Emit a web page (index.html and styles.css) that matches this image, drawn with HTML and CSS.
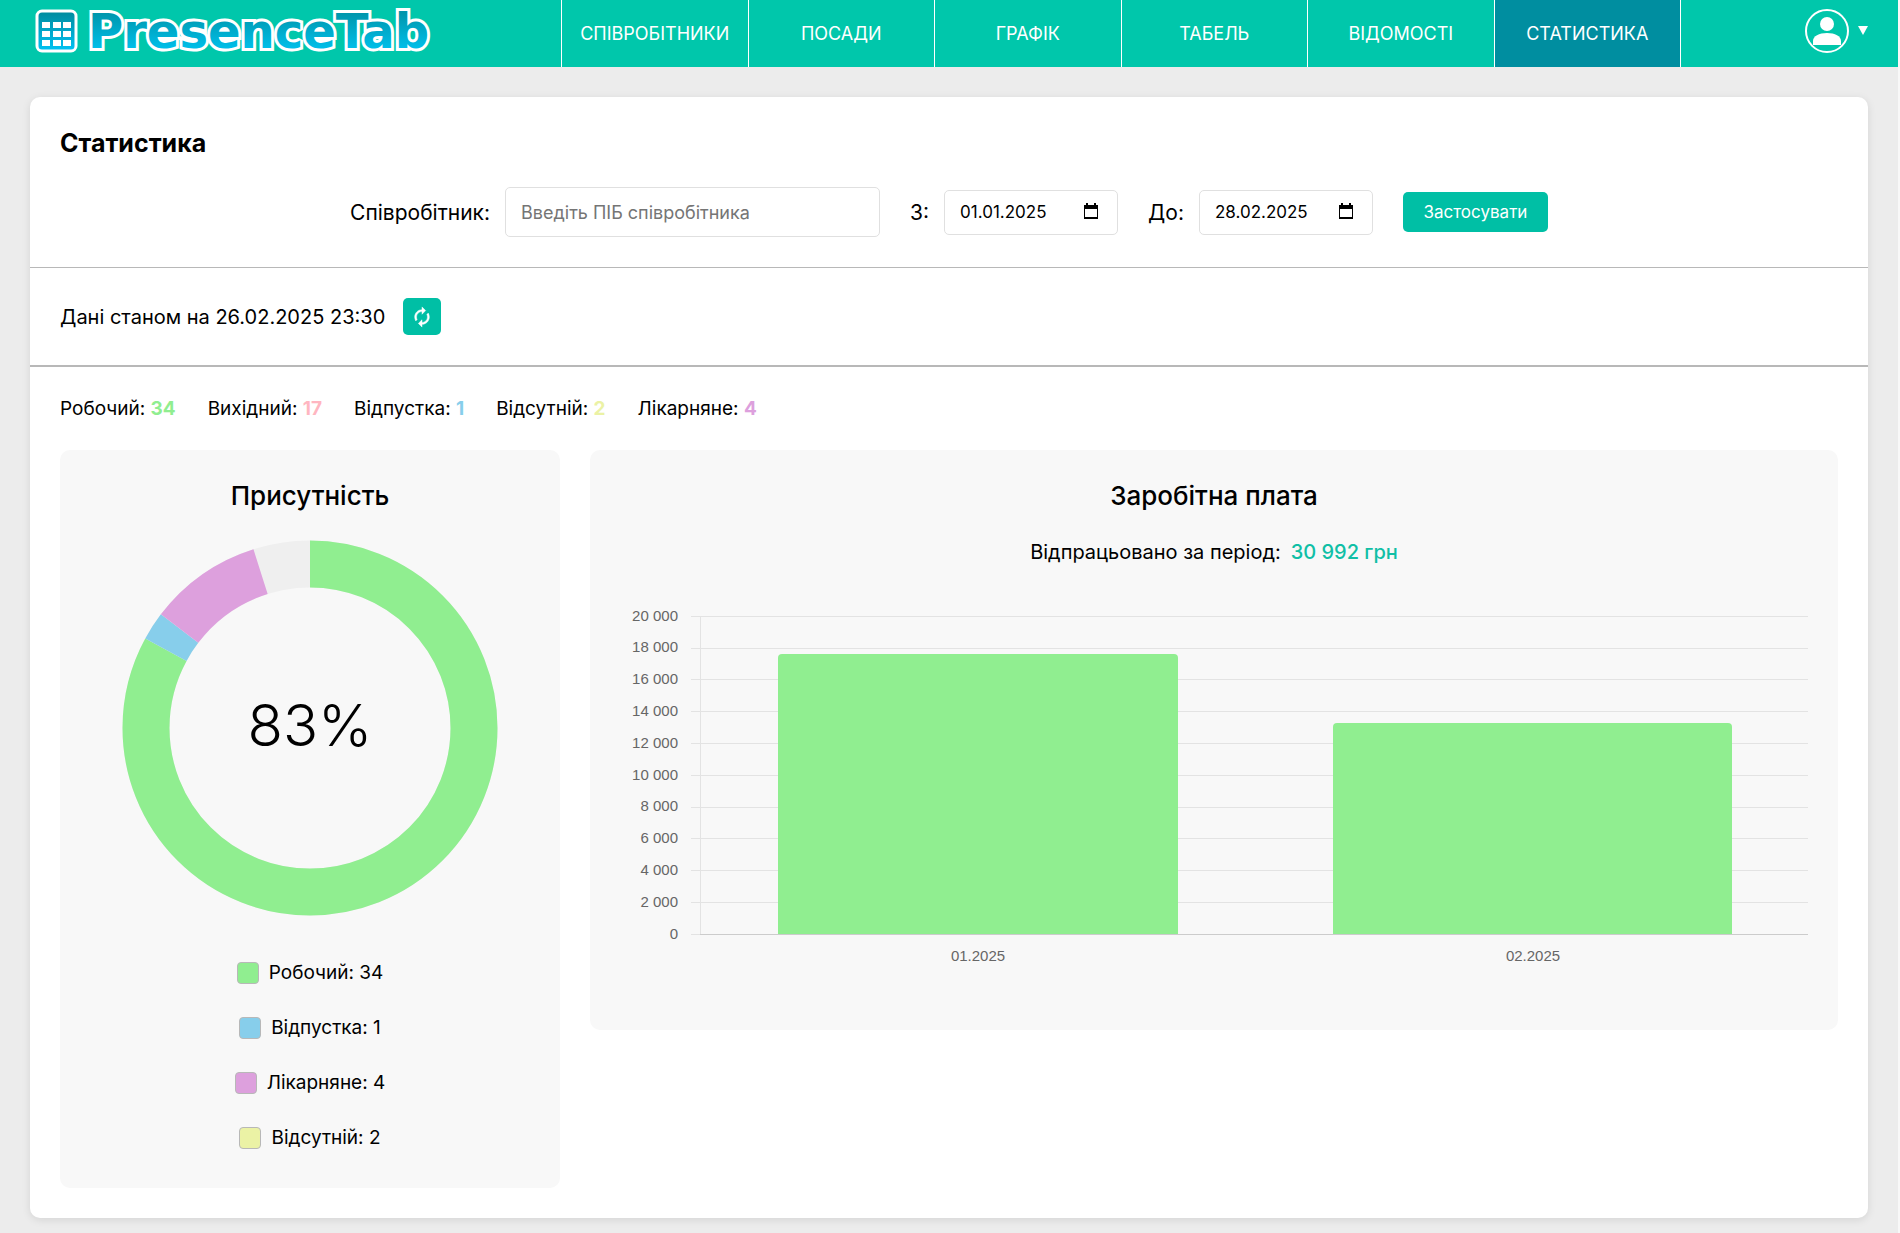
FILE: index.html
```html
<!DOCTYPE html>
<html lang="uk">
<head>
<meta charset="utf-8">
<title>PresenceTab — Статистика</title>
<meta name="viewport" content="width=device-width, initial-scale=1">
<link rel="stylesheet" href="styles.css">
</head>
<body>
<header class="topbar">
  <a class="brand" href="#" aria-label="PresenceTab">
    <svg class="brand-logo" viewBox="0 0 420 67" role="img" aria-label="PresenceTab">
      <defs>
        <linearGradient id="g" x1="0" y1="0" x2="0" y2="1">
          <stop offset="0" stop-color="#008a9c"/><stop offset="1" stop-color="#00c3f5"/>
        </linearGradient>
        <linearGradient id="t" gradientUnits="userSpaceOnUse" x1="0" y1="13" x2="0" y2="49">
          <stop offset="0" stop-color="#0096ac"/><stop offset="1" stop-color="#00bfea"/>
        </linearGradient>
      </defs>
      <rect x="2" y="11" width="39" height="40" rx="5" fill="url(#g)" stroke="#fff" stroke-width="3"/>
      <path fill="#fff" d="M7 22h8v6H7zM18 22h8v6h-8zM28 22h8v6h-8zM7 31h8v6H7zM18 31h8v6h-8zM28 31h8v6h-8zM7 40h8v6H7zM18 40h8v6h-8zM28 40h8v6h-8z"/>
      <text class="brand-name" x="53" y="48" fill="url(#t)">PresenceTab</text>
    </svg>
  </a>
  <nav class="nav">
    <a href="#">СПІВРОБІТНИКИ</a>
    <a href="#">ПОСАДИ</a>
    <a href="#">ГРАФІК</a>
    <a href="#">ТАБЕЛЬ</a>
    <a href="#">ВІДОМОСТІ</a>
    <a href="#" class="active" aria-current="page">СТАТИСТИКА</a>
  </nav>
  <button class="user" type="button" aria-label="Профіль">
    <svg width="44" height="44" viewBox="0 0 44 44">
      <circle cx="22" cy="22" r="21" fill="none" stroke="#fff" stroke-width="2"/>
      <circle cx="22" cy="15" r="7" fill="#fff"/>
      <path fill="#fff" d="M8 36v-4c0-5 6-8 14-8s14 3 14 8v4z"/>
    </svg>
    <svg width="10" height="9" viewBox="0 0 10 9"><path fill="#fff" d="M0 0h10L5 9z"/></svg>
  </button>
</header>

<main class="card">
  <section class="filters">
    <h1>Статистика</h1>
    <form class="filter-row">
      <div class="field">
        <label for="employee">Співробітник:</label>
        <input id="employee" class="employee" type="text" placeholder="Введіть ПІБ співробітника">
      </div>
      <div class="field">
        <label for="from">З:</label>
        <span class="date">
          <input id="from" type="text" value="01.01.2025">
          <svg width="14" height="16" viewBox="0 0 14 16"><path fill="#000" fill-rule="evenodd" d="M2 0h2v2h6V0h2v2h2v14H0V2h2zM1 6v8h12V6z"/></svg>
        </span>
      </div>
      <div class="field">
        <label for="to">До:</label>
        <span class="date">
          <input id="to" type="text" value="28.02.2025">
          <svg width="14" height="16" viewBox="0 0 14 16"><path fill="#000" fill-rule="evenodd" d="M2 0h2v2h6V0h2v2h2v14H0V2h2zM1 6v8h12V6z"/></svg>
        </span>
      </div>
      <button class="apply" type="button">Застосувати</button>
    </form>
  </section>

  <section class="status">
    <span>Дані станом на 26.02.2025 23:30</span>
    <button class="refresh" type="button" aria-label="Оновити">
      <svg width="22" height="22" viewBox="0 0 24 24"><path fill="#fff" stroke="#fff" stroke-width=".5" d="M12 6v3l4-4-4-4v3c-4.400 0-8 3.600-8 8 0 1.600.5 3 1.200 4.300L6.700 14.800C6.300 14 6 13 6 12c0-3.300 2.700-6 6-6zm6.800 1.700L17.300 9.200c.4.900.7 1.800.7 2.800 0 3.300-2.700 6-6 6v-3l-4 4 4 4v-3c4.400 0 8-3.600 8-8 0-1.600-.5-3-1.200-4.300z"/></svg>
    </button>
  </section>

  <section class="report">
    <ul class="summary">
      <li>Робочий: <b class="c-work">34</b></li>
      <li>Вихідний: <b class="c-off">17</b></li>
      <li>Відпустка: <b class="c-vacation">1</b></li>
      <li>Відсутній: <b class="c-absent">2</b></li>
      <li>Лікарняне: <b class="c-sick">4</b></li>
    </ul>

    <div class="panels">
      <article class="panel">
        <h2>Присутність</h2>
        <svg class="donut" viewBox="0 0 376 376" role="img" aria-label="83%">
          <g fill="none" stroke-width="47" transform="rotate(-90 188 188)">
            <circle cx="188" cy="188" r="164" stroke="#efefef"/>
            <circle cx="188" cy="188" r="164" pathLength="41" stroke="#90ee90" stroke-dasharray="34 7"/>
            <circle cx="188" cy="188" r="164" pathLength="41" stroke="#87ceeb" stroke-dasharray="1 40" stroke-dashoffset="-34"/>
            <circle cx="188" cy="188" r="164" pathLength="41" stroke="#dda0dd" stroke-dasharray="4 37" stroke-dashoffset="-35"/>
          </g>
          <text x="188" y="206">83%</text>
        </svg>
        <ul class="legend">
          <li><i class="b-work"></i>Робочий: 34</li>
          <li><i class="b-vacation"></i>Відпустка: 1</li>
          <li><i class="b-sick"></i>Лікарняне: 4</li>
          <li><i class="b-absent"></i>Відсутній: 2</li>
        </ul>
      </article>

      <article class="panel">
        <h2>Заробітна плата</h2>
        <p class="earned">Відпрацьовано за період: <strong>30 992 грн</strong></p>
        <svg class="chart" viewBox="0 0 1188 391" role="img" aria-label="Заробітна плата за місяцями">
          <path class="grid" d="M71 15.500H1188M71 47.500H1188M71 78.500H1188M71 110.500H1188M71 142.500H1188M71 174.500H1188M71 206.500H1188M71 237.500H1188M71 269.500H1188M71 301.500H1188M71 333.500H1188M80.500 15V333"/>
          <path class="base" d="M80 333.500H1188"/>
          <path class="bar" d="M158 333V57a4 4 0 0 1 4-4H554a4 4 0 0 1 4 4V333z"/>
          <path class="bar" d="M713 333V126a4 4 0 0 1 4-4H1108a4 4 0 0 1 4 4V333z"/>
          <g class="ylabels">
            <text x="58" y="20">20 000</text><text x="58" y="51">18 000</text>
            <text x="58" y="83">16 000</text><text x="58" y="115">14 000</text>
            <text x="58" y="147">12 000</text><text x="58" y="179">10 000</text>
            <text x="58" y="210">8 000</text><text x="58" y="242">6 000</text>
            <text x="58" y="274">4 000</text><text x="58" y="306">2 000</text>
            <text x="58" y="338">0</text>
          </g>
          <g class="xlabels"><text x="358" y="360">01.2025</text><text x="913" y="360">02.2025</text></g>
        </svg>
      </article>
    </div>
  </section>
</main>
</body>
</html>
```

FILE: styles.css
```css
* { box-sizing: border-box; }

body {
  margin: 0;
  border-right: 2px solid #f8f8f8;
  background: #ececec;
  color: #000;
  font-family: Inter, "Noto Sans", sans-serif;
  font-size: 19px;
}

h1, h2, p, ul { margin: 0; padding: 0; }
ul { list-style: none; }
button, input { font-family: inherit; }
button { border: 0; cursor: pointer; }

/* Top bar */
.topbar {
  display: flex;
  align-items: stretch;
  height: 67px;
  padding: 0 30px 0 35px;
  background: #00c7ab;
}
.brand { flex: 0 0 526px; }
.brand-logo { display: block; width: 420px; height: 67px; }
.brand-name {
  font-family: "DejaVu Sans", sans-serif;
  font-weight: 700;
  font-size: 48px;
  stroke: #fff;
  stroke-width: 6px;
  stroke-linejoin: miter;
  stroke-miterlimit: 2;
  paint-order: stroke;
}
.nav {
  flex: 0 1 1120px;
  display: grid;
  grid-template-columns: repeat(6, 1fr);
  border-right: 1px solid #fff;
  font-size: 18px;
}
.nav a {
  display: flex;
  align-items: center;
  justify-content: center;
  border-left: 1px solid #fff;
  color: #fff;
  text-decoration: none;
}
.nav .active { background: #008ea0; }
.user {
  display: flex;
  align-items: center;
  gap: 9px;
  margin-left: auto;
  padding: 0 0 6px;
  background: none;
}

/* Page card */
.card {
  margin: 30px 30px 15px;
  background: #fff;
  border-radius: 10px;
  box-shadow: 0 2px 8px rgba(0, 0, 0, .1);
}
.filters { padding: 30px; border-bottom: 1px solid #b8b8b8; }
h1 { font-size: 25px; line-height: 32px; font-weight: 700; }
.filter-row {
  display: flex;
  justify-content: center;
  align-items: center;
  gap: 30px;
  margin-top: 28px;
}
.field { display: flex; align-items: center; gap: 15px; font-size: 21px; }
input {
  border: 1px solid #e0e0e0;
  border-radius: 5px;
  background: #fff;
  color: #000;
  font-size: 17px;
}
input::placeholder { color: #757575; opacity: 1; }
.employee { width: 375px; height: 50px; padding: 0 15px; font-size: 18px; }
.date { position: relative; display: flex; }
.date input { width: 174px; height: 45px; padding: 0 15px; }
.date svg { position: absolute; right: 20px; top: 13px; }
.apply {
  width: 145px;
  height: 40px;
  padding: 0;
  border-radius: 5px;
  background: #00bfa5;
  color: #fff;
  font-size: 17px;
}

.status {
  display: flex;
  align-items: center;
  gap: 18px;
  padding: 30px;
  border-bottom: 2px solid #b8b8b8;
  font-size: 20px;
}
.refresh {
  display: grid;
  place-items: center;
  width: 38px;
  height: 37px;
  padding: 0;
  border-radius: 5px;
  background: #00bfa5;
}

.report { padding: 30px; }
.summary { display: flex; gap: 32px; line-height: 23px; }

.panels {
  display: grid;
  grid-template-columns: 500px 1fr;
  align-items: start;
  gap: 30px;
  margin-top: 30px;
}
.panel {
  display: flex;
  flex-direction: column;
  align-items: center;
  padding: 30px 30px 38px;
  border-radius: 10px;
  background: #f8f8f8;
}
h2 { font-size: 26px; line-height: 32px; font-weight: 500; }

.donut { width: 376px; height: 376px; margin-top: 28px; }
.donut text { font-size: 58px; font-weight: 300; text-anchor: middle; }
.legend {
  display: flex;
  flex-direction: column;
  align-items: center;
  gap: 31px;
  margin-top: 45px;
  line-height: 24px;
}
.legend li { display: flex; align-items: center; gap: 10px; }
.legend i {
  width: 22px;
  height: 22px;
  border: 1px solid #b8b8b8;
  border-radius: 4px;
}

.earned {
  display: flex;
  align-items: center;
  gap: 10px;
  margin-top: 28px;
  font-size: 20px;
  line-height: 24px;
}
.earned strong { color: #10bfa6; font-weight: 500; }
.chart { width: 100%; height: auto; margin-top: 37px; }
.chart text {
  font-family: "Liberation Sans", Arial, sans-serif;
  font-size: 15px;
  fill: #666;
}
.ylabels { text-anchor: end; }
.xlabels { text-anchor: middle; }
.grid { stroke: #e3e3e3; fill: none; }
.base { stroke: #ccc; }
.bar { fill: #90ee90; }

.c-work { color: #90ee90; }
.c-off { color: #ffb6c1; }
.c-vacation { color: #87ceeb; }
.c-absent { color: #ebf2a5; }
.c-sick { color: #dda0dd; }
.b-work { background: #90ee90; }
.b-vacation { background: #87ceeb; }
.b-absent { background: #ebf2a5; }
.b-sick { background: #dda0dd; }
```
